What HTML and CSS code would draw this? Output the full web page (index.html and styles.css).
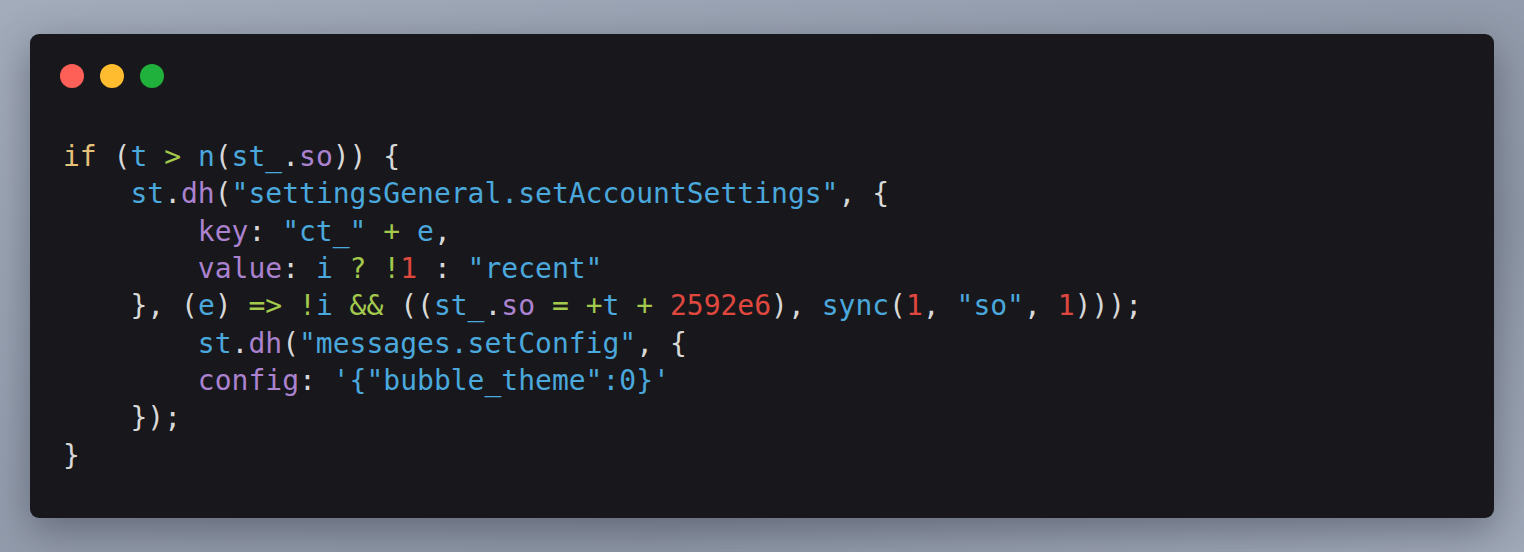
FILE: index.html
```html
<!DOCTYPE html>
<html>
<head>
<meta charset="utf-8">
<link rel="stylesheet" href="styles.css">
</head>
<body>
<div class="window">
  <div class="lights">
    <span class="dot red"></span>
    <span class="dot yellow"></span>
    <span class="dot green"></span>
  </div>
<pre class="code"><span class="kw">if</span> <span class="p">(</span><span class="b">t</span> <span class="g">&gt;</span> <span class="b">n</span><span class="p">(</span><span class="b">st_</span><span class="p">.</span><span class="m">so</span><span class="p">))</span> <span class="p">{</span>
    <span class="b">st</span><span class="p">.</span><span class="m">dh</span><span class="p">(</span><span class="b">"settingsGeneral.setAccountSettings"</span><span class="p">,</span> <span class="p">{</span>
        <span class="m">key</span><span class="p">:</span> <span class="b">"ct_"</span> <span class="g">+</span> <span class="b">e</span><span class="p">,</span>
        <span class="m">value</span><span class="p">:</span> <span class="b">i</span> <span class="g">?</span> <span class="g">!</span><span class="r">1</span> <span class="p">:</span> <span class="b">"recent"</span>
    <span class="p">},</span> <span class="p">(</span><span class="b">e</span><span class="p">)</span> <span class="g">=&gt;</span> <span class="g">!</span><span class="b">i</span> <span class="g">&amp;&amp;</span> <span class="p">((</span><span class="b">st_</span><span class="p">.</span><span class="m">so</span> <span class="g">=</span> <span class="g">+</span><span class="b">t</span> <span class="g">+</span> <span class="r">2592e6</span><span class="p">),</span> <span class="b">sync</span><span class="p">(</span><span class="r">1</span><span class="p">,</span> <span class="b">"so"</span><span class="p">,</span> <span class="r">1</span><span class="p">)));</span>
        <span class="b">st</span><span class="p">.</span><span class="m">dh</span><span class="p">(</span><span class="b">"messages.setConfig"</span><span class="p">,</span> <span class="p">{</span>
        <span class="m">config</span><span class="p">:</span> <span class="b">'{"bubble_theme":0}'</span>
    <span class="p">});</span>
<span class="p">}</span></pre>
</div>
</body>
</html>
```
FILE: styles.css
```css
html, body {
  margin: 0;
  height: 100%;
}
body {
  box-sizing: border-box;
  padding: 34px 30px;
  background: linear-gradient(160deg, #a3acbb 0%, #959eae 40%, #8e97a6 70%, #a0a9b8 100%);
  overflow: hidden;
}
.window {
  box-sizing: border-box;
  height: 484px;
  background: #18181c;
  border-radius: 9px;
  padding: 30px 34px 0 33px;
  box-shadow: 0 12px 40px rgba(40, 45, 60, 0.45);
}
.lights {
  display: flex;
  gap: 16px;
  margin-left: -3px;
}
.dot {
  width: 24px;
  height: 24px;
  border-radius: 50%;
  display: block;
}
.red { background: #fe5f57; }
.yellow { background: #febc2e; }
.green { background: #20b13c; }
.code {
  margin: 50px 0 0 0;
  font-family: "DejaVu Sans Mono", monospace;
  font-size: 28px;
  line-height: 37.33px;
  color: #d8d8d8;
}
.kw { color: #e6c17a; }
.b { color: #4aa8dc; }
.m { color: #ab82cf; }
.g { color: #a3c94d; }
.r { color: #e0483f; }
.p { color: #d8d8d8; }
```
